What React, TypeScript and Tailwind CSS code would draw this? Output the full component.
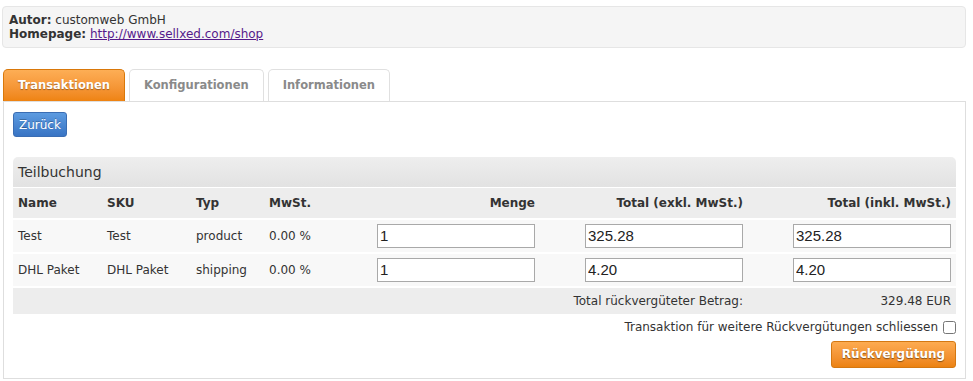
import React from 'react';

const rows = [
  { name: 'Test', sku: 'Test', typ: 'product', mwst: '0.00 %', menge: '1', exkl: '325.28', inkl: '325.28' },
  { name: 'DHL Paket', sku: 'DHL Paket', typ: 'shipping', mwst: '0.00 %', menge: '1', exkl: '4.20', inkl: '4.20' },
];

function Field({ value }: { value: string }) {
  return (
    <input
      type="text"
      defaultValue={value}
      className="h-[24px] w-[158px] border border-[#a9a9a9] bg-white px-[2px] text-[15px] text-[#222] outline-none [font-family:'Liberation_Sans_Narrow','Liberation_Sans',Arial,sans-serif]"
    />
  );
}

function Tab({ label, active = false }: { label: string; active?: boolean }) {
  return active ? (
    <div className="flex h-[32px] items-center rounded-t-[5px] border border-b-0 border-[#d9780a] bg-gradient-to-b from-[#fdae55] to-[#ee8310] px-[14px] text-[11.5px] font-bold text-white [text-shadow:0_1px_1px_rgba(0,0,0,0.35)]">
      {label}
    </div>
  ) : (
    <div className="flex h-[32px] items-center rounded-t-[5px] border border-b-0 border-[#e0e0e0] bg-white px-[14px] text-[11.5px] font-bold text-[#8a8a8a]">
      {label}
    </div>
  );
}

export default function App() {
  return (
    <div className="w-[966px] pl-[2px] pt-[6px] text-[12px] text-[#333] [font-family:'DejaVu_Sans',Verdana,sans-serif]">
      <div className="rounded-[4px] border border-[#e6e6e6] bg-[#f5f5f5] px-[6px] py-[6px] leading-[14px]">
        <p>
          <b>Autor:</b> customweb GmbH
        </p>
        <p>
          <b>Homepage:</b>{' '}
          <a href="#" className="text-[#551a8b] underline">
            http://www.sellxed.com/shop
          </a>
        </p>
      </div>

      <div className="mt-[21px] flex gap-[4px] pl-[1px]">
        <Tab label="Transaktionen" active />
        <Tab label="Konfigurationen" />
        <Tab label="Informationen" />
      </div>

      <div className="ml-[1px] border border-[#dedede] bg-white px-[9px] pb-[10px] pt-[10px]">
        <button
          type="button"
          className="h-[25px] rounded-[3px] border border-[#3a6db3] bg-gradient-to-b from-[#5d9be0] to-[#3874c4] px-[5px] text-[12px] text-white [text-shadow:0_-1px_0_rgba(0,0,0,0.25)]"
        >
          Zurück
        </button>

        <div className="mt-[20px]">
          <div className="flex h-[30px] items-center rounded-t-[5px] bg-gradient-to-b from-[#eeeeee] to-[#e2e2e2] px-[5px] text-[14px] text-[#333]">
            Teilbuchung
          </div>
          <table className="w-[943px] table-fixed border-collapse">
            <colgroup>
              <col className="w-[89px]" />
              <col className="w-[89px]" />
              <col className="w-[73px]" />
              <col className="w-[68px]" />
              <col className="w-[208px]" />
              <col className="w-[208px]" />
              <col className="w-[208px]" />
            </colgroup>
            <thead>
              <tr className="h-[31px] border-t border-white bg-[#ededed] font-bold">
                <th className="px-[5px] text-left">Name</th>
                <th className="px-[5px] text-left">SKU</th>
                <th className="px-[5px] text-left">Typ</th>
                <th className="px-[5px] text-left">MwSt.</th>
                <th className="px-[5px] text-right">Menge</th>
                <th className="px-[5px] text-right">Total (exkl. MwSt.)</th>
                <th className="px-[5px] text-right">Total (inkl. MwSt.)</th>
              </tr>
            </thead>
            <tbody>
              {rows.map((r) => (
                <tr key={r.name} className="h-[34px] border-t-2 border-white bg-[#f8f8f8]">
                  <td className="px-[5px]">{r.name}</td>
                  <td className="px-[5px]">{r.sku}</td>
                  <td className="px-[5px]">{r.typ}</td>
                  <td className="px-[5px]">{r.mwst}</td>
                  <td className="px-[5px] text-right">
                    <Field value={r.menge} />
                  </td>
                  <td className="px-[5px] text-right">
                    <Field value={r.exkl} />
                  </td>
                  <td className="px-[5px] text-right">
                    <Field value={r.inkl} />
                  </td>
                </tr>
              ))}
              <tr className="h-[27px] border-t-2 border-white bg-[#ededed]">
                <td colSpan={6} className="px-[5px] text-right">
                  Total rückvergüteter Betrag:
                </td>
                <td className="px-[5px] text-right">329.48 EUR</td>
              </tr>
            </tbody>
          </table>

          <div className="mt-[6px] flex items-center justify-end gap-[5px] leading-[15px]">
            <span>Transaktion für weitere Rückvergütungen schliessen</span>
            <input type="checkbox" className="h-[13px] w-[13px]" />
          </div>

          <div className="mt-[6px] flex justify-end">
            <button
              type="button"
              className="h-[27px] w-[125px] rounded-[3px] border border-[#d47812] bg-gradient-to-b from-[#fdab50] to-[#ec8210] text-[12px] font-bold text-white [text-shadow:0_1px_1px_rgba(0,0,0,0.45)]"
            >
              Rückvergütung
            </button>
          </div>
        </div>
      </div>
    </div>
  );
}
